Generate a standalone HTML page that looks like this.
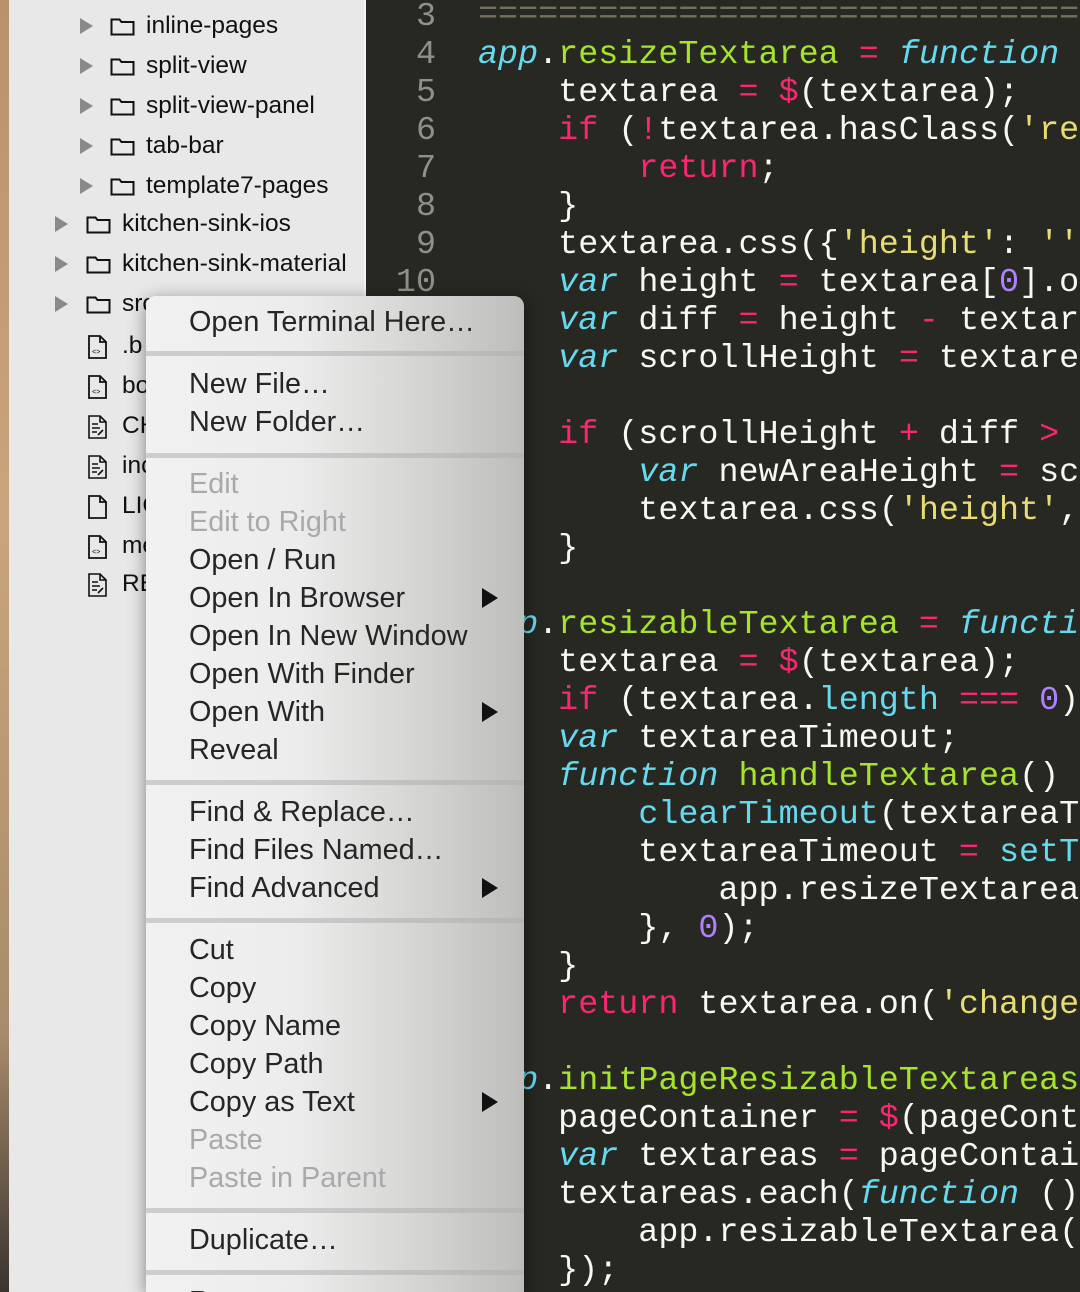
<!DOCTYPE html>
<html><head><meta charset="utf-8"><style>
*{margin:0;padding:0;box-sizing:border-box}
html,body{width:1080px;height:1292px;overflow:hidden}
body{position:relative;background:#272822;font-family:"Liberation Sans",sans-serif}
#strip{position:absolute;left:0;top:0;width:9px;height:1292px;background:linear-gradient(#b8926a,#c9a57c 40%,#a88b6c 80%,#3a3430)}
#side{position:absolute;left:9px;top:0;width:357px;height:1292px;background:#e8e8e8;border-right:2px solid #f4f4f4}
.row{position:absolute;height:40px;font-size:24.5px;color:#111;line-height:40px;white-space:nowrap}
.arr{position:absolute;width:0;height:0;border-left:13px solid #8a8a8a;border-top:8px solid transparent;border-bottom:8px solid transparent}
.fold{position:absolute;width:25px;height:19px}
#code{position:absolute;left:366px;top:0;width:714px;height:1292px;background:#272822;font-family:"Liberation Mono",monospace;font-size:33.4px;color:#f8f8f2}
.ln{position:absolute;left:0;width:70px;text-align:right;color:#8f908a;height:38px;line-height:38px}
.l{position:absolute;left:112px;height:38px;line-height:38px;white-space:pre}
.p{color:#f92672}.g{color:#a6e22e}.c{color:#66d9ef}.i{color:#66d9ef;font-style:italic}.y{color:#e6db74}.v{color:#ae81ff}.cm{color:#75715e}
#menu{position:absolute;left:146px;top:296px;width:378px;height:996px;border-radius:10px 10px 0 0;background:linear-gradient(90deg,#f1f1f1 0%,#ececec 40%,#d2d2d0 75%,#bdbdbb 100%);box-shadow:0 4px 18px rgba(0,0,0,.45);overflow:hidden}
.mi{position:absolute;left:43px;font-size:28.8px;color:#262626;height:38px;line-height:38px;white-space:nowrap}
.dis{color:#a9a9a9}
.sep{position:absolute;left:0;width:378px;height:5px;background:rgba(175,175,175,.55)}
.tri{position:absolute;left:336px;width:0;height:0;border-left:16px solid #111;border-top:10px solid transparent;border-bottom:10px solid transparent}
</style></head><body>
<div id="strip"></div>
<div id="side">
<div class="arr" style="left:71px;top:18px"></div><svg class="fold" style="left:101px;top:17px" viewBox="0 0 25 19"><path d="M1.5 2.5h8l2 2.5h12v12.5h-22z" fill="none" stroke="#111" stroke-width="2"/></svg><div class="row" style="left:137px;top:6px">inline-pages</div>
<div class="arr" style="left:71px;top:58px"></div><svg class="fold" style="left:101px;top:57px" viewBox="0 0 25 19"><path d="M1.5 2.5h8l2 2.5h12v12.5h-22z" fill="none" stroke="#111" stroke-width="2"/></svg><div class="row" style="left:137px;top:46px">split-view</div>
<div class="arr" style="left:71px;top:98px"></div><svg class="fold" style="left:101px;top:97px" viewBox="0 0 25 19"><path d="M1.5 2.5h8l2 2.5h12v12.5h-22z" fill="none" stroke="#111" stroke-width="2"/></svg><div class="row" style="left:137px;top:86px">split-view-panel</div>
<div class="arr" style="left:71px;top:138px"></div><svg class="fold" style="left:101px;top:137px" viewBox="0 0 25 19"><path d="M1.5 2.5h8l2 2.5h12v12.5h-22z" fill="none" stroke="#111" stroke-width="2"/></svg><div class="row" style="left:137px;top:126px">tab-bar</div>
<div class="arr" style="left:71px;top:178px"></div><svg class="fold" style="left:101px;top:177px" viewBox="0 0 25 19"><path d="M1.5 2.5h8l2 2.5h12v12.5h-22z" fill="none" stroke="#111" stroke-width="2"/></svg><div class="row" style="left:137px;top:166px">template7-pages</div>
<div class="arr" style="left:46px;top:216px"></div><svg class="fold" style="left:77px;top:215px" viewBox="0 0 25 19"><path d="M1.5 2.5h8l2 2.5h12v12.5h-22z" fill="none" stroke="#111" stroke-width="2"/></svg><div class="row" style="left:113px;top:204px">kitchen-sink-ios</div>
<div class="arr" style="left:46px;top:256px"></div><svg class="fold" style="left:77px;top:255px" viewBox="0 0 25 19"><path d="M1.5 2.5h8l2 2.5h12v12.5h-22z" fill="none" stroke="#111" stroke-width="2"/></svg><div class="row" style="left:113px;top:244px">kitchen-sink-material</div>
<div class="arr" style="left:46px;top:296px"></div><svg class="fold" style="left:77px;top:295px" viewBox="0 0 25 19"><path d="M1.5 2.5h8l2 2.5h12v12.5h-22z" fill="none" stroke="#111" stroke-width="2"/></svg><div class="row" style="left:113px;top:284px">src</div>
<svg style="position:absolute;left:79px;top:335px" width="20" height="24" viewBox="0 0 20 24"><path d="M1 1h11l6 6v16H1z M12 1v6h6" fill="none" stroke="#111" stroke-width="1.8"/><text x="4" y="19" font-size="7" font-family="Liberation Mono">&lt;&gt;</text></svg><div class="row" style="left:113px;top:326px">.b</div>
<svg style="position:absolute;left:79px;top:375px" width="20" height="24" viewBox="0 0 20 24"><path d="M1 1h11l6 6v16H1z M12 1v6h6" fill="none" stroke="#111" stroke-width="1.8"/><text x="4" y="19" font-size="7" font-family="Liberation Mono">&lt;&gt;</text></svg><div class="row" style="left:113px;top:366px">bo</div>
<svg style="position:absolute;left:79px;top:415px" width="20" height="24" viewBox="0 0 20 24"><path d="M1 1h11l6 6v16H1z M12 1v6h6 M4 9h6 M4 13h8 M4 17h5 M10 20l5-5" fill="none" stroke="#111" stroke-width="1.6"/></svg><div class="row" style="left:113px;top:406px">CH</div>
<svg style="position:absolute;left:79px;top:455px" width="20" height="24" viewBox="0 0 20 24"><path d="M1 1h11l6 6v16H1z M12 1v6h6 M4 9h6 M4 13h8 M4 17h5 M10 20l5-5" fill="none" stroke="#111" stroke-width="1.6"/></svg><div class="row" style="left:113px;top:446px">inc</div>
<svg style="position:absolute;left:79px;top:495px" width="20" height="24" viewBox="0 0 20 24"><path d="M1 1h11l6 6v16H1z M12 1v6h6" fill="none" stroke="#111" stroke-width="1.8"/></svg><div class="row" style="left:113px;top:486px">LIC</div>
<svg style="position:absolute;left:79px;top:535px" width="20" height="24" viewBox="0 0 20 24"><path d="M1 1h11l6 6v16H1z M12 1v6h6" fill="none" stroke="#111" stroke-width="1.8"/><text x="4" y="19" font-size="7" font-family="Liberation Mono">&lt;&gt;</text></svg><div class="row" style="left:113px;top:526px">me</div>
<svg style="position:absolute;left:79px;top:573px" width="20" height="24" viewBox="0 0 20 24"><path d="M1 1h11l6 6v16H1z M12 1v6h6 M4 9h6 M4 13h8 M4 17h5 M10 20l5-5" fill="none" stroke="#111" stroke-width="1.6"/></svg><div class="row" style="left:113px;top:564px">RE</div>
</div>
<div id="code">
<div class="ln" style="top:-2px">3</div><div class="ln" style="top:36px">4</div><div class="ln" style="top:74px">5</div><div class="ln" style="top:112px">6</div><div class="ln" style="top:150px">7</div><div class="ln" style="top:188px">8</div><div class="ln" style="top:226px">9</div><div class="ln" style="top:264px">10</div>
<div class="l cm" style="top:-4px">==============================</div>
<div class="l" style="top:36px"><span class="i">app</span>.<span class="g">resizeTextarea</span> <span class="p">=</span> <span class="i">function</span></div>
<div class="l" style="top:74px">    textarea <span class="p">=</span> <span class="p">$</span>(textarea);</div>
<div class="l" style="top:112px">    <span class="p">if</span> (<span class="p">!</span>textarea.hasClass(<span class="y">'re</span></div>
<div class="l" style="top:150px">        <span class="p">return</span>;</div>
<div class="l" style="top:188px">    }</div>
<div class="l" style="top:226px">    textarea.css({<span class="y">'height'</span>: <span class="y">''</span></div>
<div class="l" style="top:264px">    <span class="i">var</span> height <span class="p">=</span> textarea[<span class="v">0</span>].o</div>
<div class="l" style="top:302px">    <span class="i">var</span> diff <span class="p">=</span> height <span class="p">-</span> textarea</div>
<div class="l" style="top:340px">    <span class="i">var</span> scrollHeight <span class="p">=</span> textarea</div>
<div class="l" style="top:416px">    <span class="p">if</span> (scrollHeight <span class="p">+</span> diff <span class="p">&gt;</span></div>
<div class="l" style="top:454px">        <span class="i">var</span> newAreaHeight <span class="p">=</span> sc</div>
<div class="l" style="top:492px">        textarea.css(<span class="y">'height'</span>,</div>
<div class="l" style="top:530px">    }</div>
<div class="l" style="top:606px"><span class="i">app</span>.<span class="g">resizableTextarea</span> <span class="p">=</span> <span class="i">function</span></div>
<div class="l" style="top:644px">    textarea <span class="p">=</span> <span class="p">$</span>(textarea);</div>
<div class="l" style="top:682px">    <span class="p">if</span> (textarea.<span class="c">length</span> <span class="p">===</span> <span class="v">0</span>)</div>
<div class="l" style="top:720px">    <span class="i">var</span> textareaTimeout;</div>
<div class="l" style="top:758px">    <span class="i">function</span> <span class="g">handleTextarea</span>()</div>
<div class="l" style="top:796px">        <span class="c">clearTimeout</span>(textareaT</div>
<div class="l" style="top:834px">        textareaTimeout <span class="p">=</span> <span class="c">setT</span></div>
<div class="l" style="top:872px">            app.resizeTextarea</div>
<div class="l" style="top:910px">        }, <span class="v">0</span>);</div>
<div class="l" style="top:948px">    }</div>
<div class="l" style="top:986px">    <span class="p">return</span> textarea.on(<span class="y">'change</span></div>
<div class="l" style="top:1062px"><span class="i">app</span>.<span class="g">initPageResizableTextareas</span></div>
<div class="l" style="top:1100px">    pageContainer <span class="p">=</span> <span class="p">$</span>(pageCont</div>
<div class="l" style="top:1138px">    <span class="i">var</span> textareas <span class="p">=</span> pageContai</div>
<div class="l" style="top:1176px">    textareas.each(<span class="i">function</span> ()</div>
<div class="l" style="top:1214px">        app.resizableTextarea(</div>
<div class="l" style="top:1252px">    });</div>
</div>
<div id="menu">
<div class="mi" style="top:7px">Open Terminal Here…</div>
<div class="sep" style="top:55px"></div>
<div class="mi" style="top:69px">New File…</div>
<div class="mi" style="top:107px">New Folder…</div>
<div class="sep" style="top:157px"></div>
<div class="mi dis" style="top:169px">Edit</div>
<div class="mi dis" style="top:207px">Edit to Right</div>
<div class="mi" style="top:245px">Open / Run</div>
<div class="mi" style="top:283px">Open In Browser</div><div class="tri" style="top:292px"></div>
<div class="mi" style="top:321px">Open In New Window</div>
<div class="mi" style="top:359px">Open With Finder</div>
<div class="mi" style="top:397px">Open With</div><div class="tri" style="top:406px"></div>
<div class="mi" style="top:435px">Reveal</div>
<div class="sep" style="top:484px"></div>
<div class="mi" style="top:497px">Find &amp; Replace…</div>
<div class="mi" style="top:535px">Find Files Named…</div>
<div class="mi" style="top:573px">Find Advanced</div><div class="tri" style="top:582px"></div>
<div class="sep" style="top:622px"></div>
<div class="mi" style="top:635px">Cut</div>
<div class="mi" style="top:673px">Copy</div>
<div class="mi" style="top:711px">Copy Name</div>
<div class="mi" style="top:749px">Copy Path</div>
<div class="mi" style="top:787px">Copy as Text</div><div class="tri" style="top:796px"></div>
<div class="mi dis" style="top:825px">Paste</div>
<div class="mi dis" style="top:863px">Paste in Parent</div>
<div class="sep" style="top:912px"></div>
<div class="mi" style="top:925px">Duplicate…</div>
<div class="sep" style="top:974px"></div>
<div class="mi" style="top:987px">Rename…</div>
</div>
</body></html>
